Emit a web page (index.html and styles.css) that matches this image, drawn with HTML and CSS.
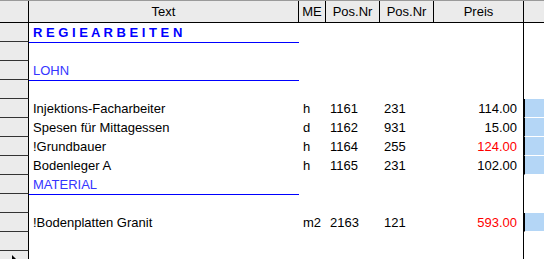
FILE: index.html
```html
<!DOCTYPE html>
<html>
    <head>
        <title>Regiearbeiten</title>
        <link rel="stylesheet" href="styles.css">
    </head>
    <body>
        <div class="sheet">
            <div class="row head">
                <div class="rh"></div>
                <div class="hc">Text</div>
                <div class="hc">ME</div>
                <div class="hc">Pos.Nr</div>
                <div class="hc">Pos.Nr</div>
                <div class="hc">Preis</div>
                <div class="hc last"></div>
            </div>

            <div class="row">
                <div class="rh"></div>
                <div class="c title group">R E G I E A R B E I T E N</div>
                <div class="c"></div><div class="c"></div><div class="c"></div>
                <div class="c price"></div><div class="c"></div>
            </div>
            <div class="row">
                <div class="rh"></div>
                <div class="c"></div><div class="c"></div><div class="c"></div><div class="c"></div>
                <div class="c price"></div><div class="c"></div>
            </div>
            <div class="row">
                <div class="rh"></div>
                <div class="c sub group">LOHN</div>
                <div class="c"></div><div class="c"></div><div class="c"></div>
                <div class="c price"></div><div class="c"></div>
            </div>
            <div class="row">
                <div class="rh"></div>
                <div class="c"></div><div class="c"></div><div class="c"></div><div class="c"></div>
                <div class="c price"></div><div class="c"></div>
            </div>

            <div class="row">
                <div class="rh"></div>
                <div class="c">Injektions-Facharbeiter</div>
                <div class="c">h</div>
                <div class="c">1161</div>
                <div class="c">231</div>
                <div class="c price">114.00</div>
                <div class="c sel"></div>
            </div>
            <div class="row">
                <div class="rh"></div>
                <div class="c">Spesen für Mittagessen</div>
                <div class="c">d</div>
                <div class="c">1162</div>
                <div class="c">931</div>
                <div class="c price">15.00</div>
                <div class="c sel"></div>
            </div>
            <div class="row">
                <div class="rh"></div>
                <div class="c">!Grundbauer</div>
                <div class="c">h</div>
                <div class="c">1164</div>
                <div class="c">255</div>
                <div class="c price red">124.00</div>
                <div class="c sel"></div>
            </div>
            <div class="row">
                <div class="rh"></div>
                <div class="c">Bodenleger A</div>
                <div class="c">h</div>
                <div class="c">1165</div>
                <div class="c">231</div>
                <div class="c price">102.00</div>
                <div class="c sel"></div>
            </div>

            <div class="row">
                <div class="rh"></div>
                <div class="c sub group">MATERIAL</div>
                <div class="c"></div><div class="c"></div><div class="c"></div>
                <div class="c price"></div><div class="c"></div>
            </div>
            <div class="row">
                <div class="rh"></div>
                <div class="c"></div><div class="c"></div><div class="c"></div><div class="c"></div>
                <div class="c price"></div><div class="c"></div>
            </div>
            <div class="row">
                <div class="rh"></div>
                <div class="c">!Bodenplatten Granit</div>
                <div class="c">m2</div>
                <div class="c">2163</div>
                <div class="c">121</div>
                <div class="c price red">593.00</div>
                <div class="c sel"></div>
            </div>
            <div class="row">
                <div class="rh"></div>
                <div class="c"></div><div class="c"></div><div class="c"></div><div class="c"></div>
                <div class="c price"></div><div class="c"></div>
            </div>
            <div class="row">
                <div class="rh current"></div>
                <div class="c"></div><div class="c"></div><div class="c"></div><div class="c"></div>
                <div class="c price"></div><div class="c"></div>
            </div>
        </div>
    </body>
</html>
```

FILE: styles.css
```css
body{
    margin: 0;
    font-size: 13px;
    font-family: "Liberation Sans", Arial, sans-serif;
    color: #000;
    background: #fff;
    overflow: hidden;
}

.sheet{
    width: 544px;
}

.row{
    display: grid;
    grid-template-columns: 29px 270px 27px 54px 54px 90px 20px;
    height: 19px;
    line-height: 19px;
}

/* column headers */
.head{
    height: 23px;
    line-height: 21px;
    background: #ebebeb;
    border-top: 1px solid #9a9a9a;
    border-bottom: 1px solid #000;
    box-sizing: border-box;
}
.hc{
    text-align: center;
    border-right: 1px solid #000;
    white-space: nowrap;
}
.hc.last{
    border-right: none;
}

/* record selector column */
.rh{
    background: #ebebeb;
    border-right: 1px solid #000;
    border-bottom: 1px solid #333;
    position: relative;
}
.head .rh{
    border-bottom: none;
}
.current::after{
    content: "";
    position: absolute;
    left: 12px;
    top: 4px;
    border-left: 5px solid #000;
    border-top: 5px solid transparent;
    border-bottom: 5px solid transparent;
}

.c{
    padding-left: 4px;
    white-space: nowrap;
    overflow: hidden;
}
.price{
    text-align: right;
    padding-right: 6px;
    border-right: 1px solid #000;
}
.red{
    color: #ff0000;
}
.sel{
    background: #b4d6f6;
    border-left: 1px solid #000;
    border-bottom: 1px solid #fff;
}

.group{
    box-shadow: 0 1px 0 #0000ff;
}
.title{
    color: #0000ff;
    font-weight: bold;
}
.sub{
    color: #3535ff;
}
```
